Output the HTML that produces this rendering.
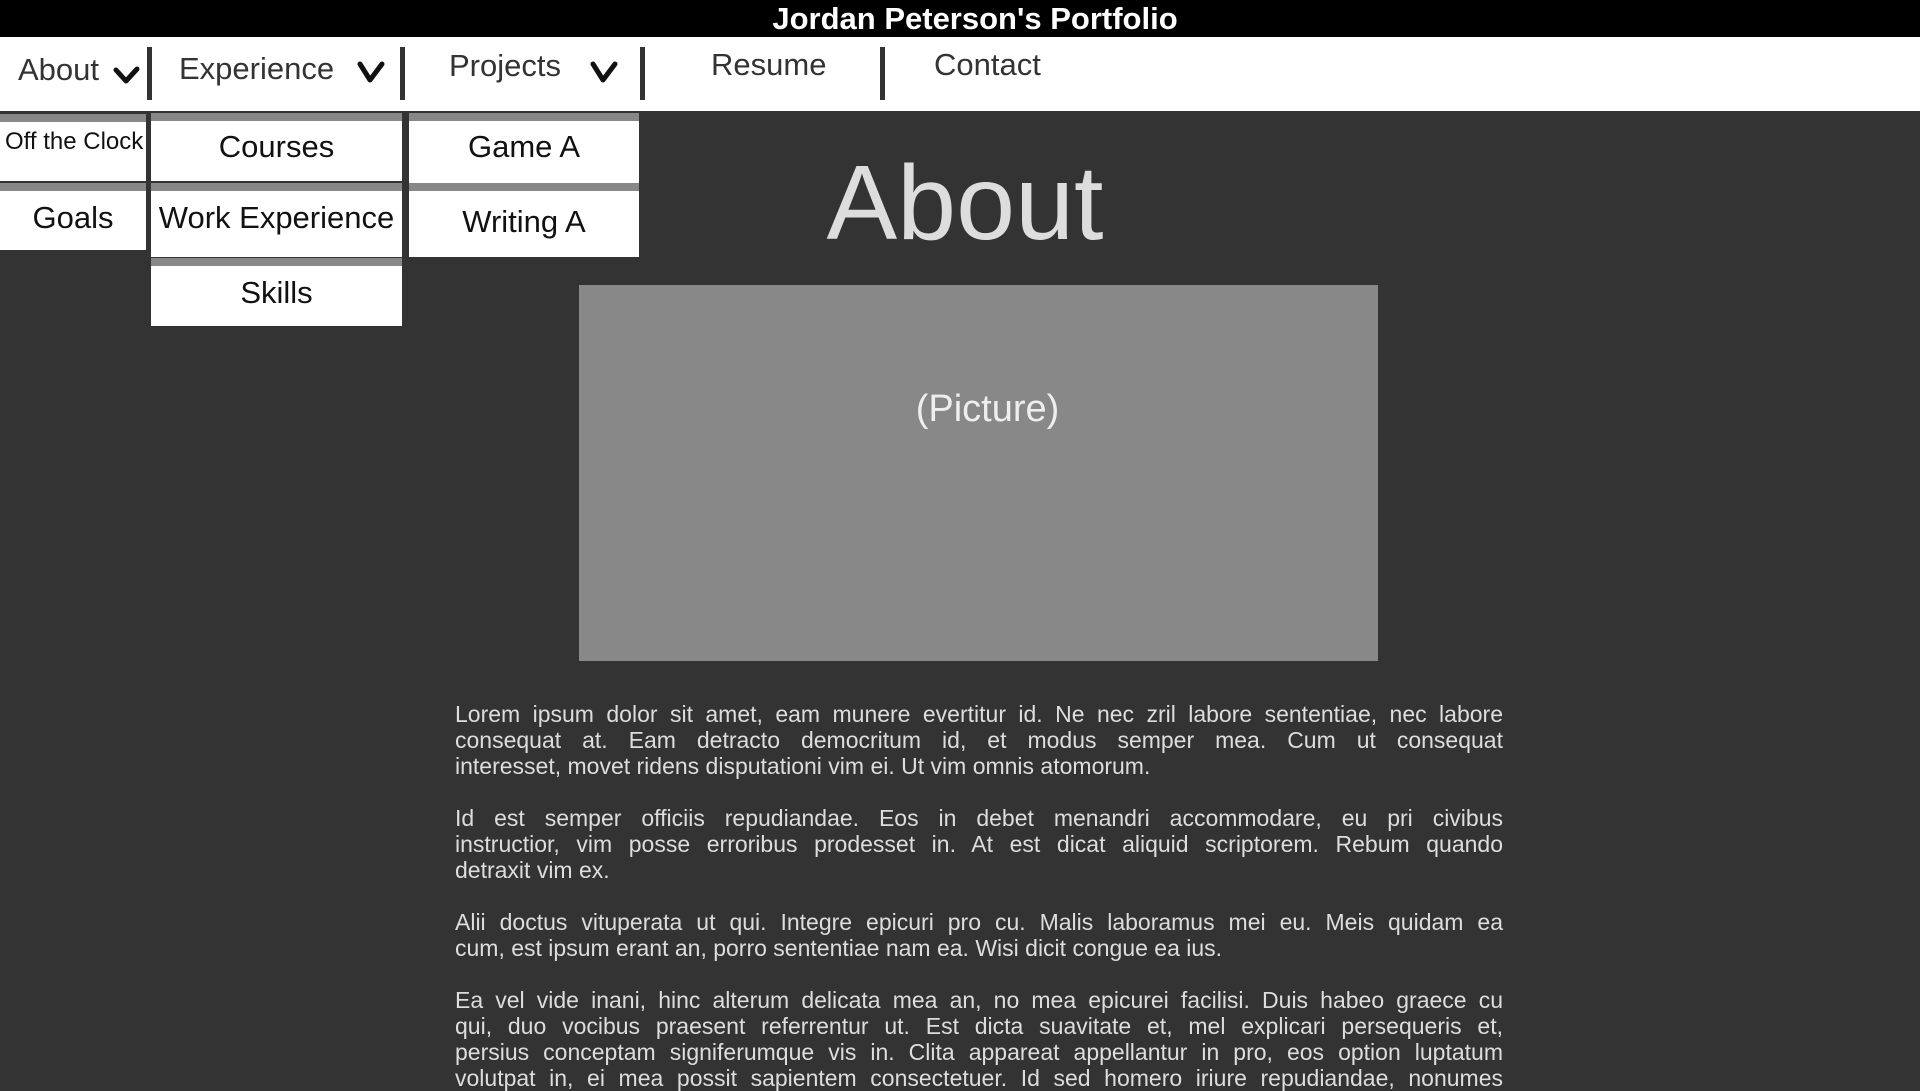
<!DOCTYPE html>
<html><head><meta charset="utf-8"><style>
*{margin:0;padding:0;box-sizing:border-box}
body{width:1920px;height:1080px;overflow:hidden;background:#333;font-family:"Liberation Sans",sans-serif;position:relative}
.hdr{position:absolute;left:0;top:0;width:1920px;height:37px;background:#000;color:#fff;font-weight:bold;font-size:31px;text-align:center;line-height:37px;padding-left:30px}
.nav{position:absolute;left:0;top:37px;width:1920px;height:74px;background:#fff}
.nt{position:absolute;font-size:31px;color:#333;white-space:nowrap}
.sep{position:absolute;top:47px;width:5px;height:53px;background:#333}
.chev{position:absolute}
.dd{position:absolute;background:#fff;border-top:8px solid #888;color:#111;text-align:center;font-size:31px;white-space:nowrap}
h1{position:absolute;left:0;width:1930px;top:150px;text-align:center;font-weight:normal;font-size:106px;color:#ddd;line-height:1}
.pic{position:absolute;left:579px;top:285px;width:799px;height:376px;background:#888;color:#eee;font-size:38px;text-align:center;padding-top:103px;padding-left:18px}
.txt{position:absolute;left:455px;top:701px;width:1048px;color:#ddd;font-size:23px;line-height:26px}
.l{text-align:justify;text-align-last:justify;white-space:nowrap;height:26px}
.e{height:26px}
</style></head><body>
<div class="hdr">Jordan Peterson's Portfolio</div>
<div class="nav"></div>
<div class="nt" style="left:18px;top:52px">About</div>
<svg class="chev" style="left:113px;top:66px" width="28" height="20"><polyline points="3,4 13,15 24,3" fill="none" stroke="#111" stroke-width="5" stroke-linejoin="round" stroke-linecap="round"/></svg>
<div class="sep" style="left:147px"></div>
<div class="nt" style="left:179px;top:51px">Experience</div>
<svg class="chev" style="left:356px;top:60px" width="30" height="24"><polyline points="4,4 14,20 26,4" fill="none" stroke="#111" stroke-width="5" stroke-linejoin="round" stroke-linecap="round"/></svg>
<div class="sep" style="left:400px"></div>
<div class="nt" style="left:449px;top:48px">Projects</div>
<svg class="chev" style="left:589px;top:60px" width="30" height="24"><polyline points="4,4 14,20 26,4" fill="none" stroke="#111" stroke-width="5" stroke-linejoin="round" stroke-linecap="round"/></svg>
<div class="sep" style="left:640px"></div>
<div class="nt" style="left:711px;top:47px">Resume</div>
<div class="sep" style="left:880px"></div>
<div class="nt" style="left:934px;top:47px">Contact</div>

<div class="dd" style="left:0;top:114px;width:146px;height:67px;font-size:24px;text-align:left;padding:6px 0 0 5px">Off the Clock</div>
<div class="dd" style="left:0;top:183px;width:146px;height:67px;padding-top:9px">Goals</div>
<div class="dd" style="left:151px;top:113px;width:251px;height:68px;padding-top:8px">Courses</div>
<div class="dd" style="left:151px;top:183px;width:251px;height:74px;padding-top:9px">Work Experience</div>
<div class="dd" style="left:151px;top:258px;width:251px;height:68px;padding-top:9px">Skills</div>
<div class="dd" style="left:409px;top:113px;width:230px;height:71px;padding-top:8px">Game A</div>
<div class="dd" style="left:409px;top:183px;width:230px;height:74px;padding-top:13px">Writing A</div>

<h1>About</h1>
<div class="pic">(Picture)</div>
<div class="txt">
<div class="l">Lorem ipsum dolor sit amet, eam munere evertitur id. Ne nec zril labore sententiae, nec labore</div>
<div class="l">consequat at. Eam detracto democritum id, et modus semper mea. Cum ut consequat</div>
<div class="e">interesset, movet ridens disputationi vim ei. Ut vim omnis atomorum.</div>
<div class="e"></div>
<div class="l">Id est semper officiis repudiandae. Eos in debet menandri accommodare, eu pri civibus</div>
<div class="l">instructior, vim posse erroribus prodesset in. At est dicat aliquid scriptorem. Rebum quando</div>
<div class="e">detraxit vim ex.</div>
<div class="e"></div>
<div class="l">Alii doctus vituperata ut qui. Integre epicuri pro cu. Malis laboramus mei eu. Meis quidam ea</div>
<div class="e">cum, est ipsum erant an, porro sententiae nam ea. Wisi dicit congue ea ius.</div>
<div class="e"></div>
<div class="l">Ea vel vide inani, hinc alterum delicata mea an, no mea epicurei facilisi. Duis habeo graece cu</div>
<div class="l">qui, duo vocibus praesent referrentur ut. Est dicta suavitate et, mel explicari persequeris et,</div>
<div class="l">persius conceptam signiferumque vis in. Clita appareat appellantur in pro, eos option luptatum</div>
<div class="l">volutpat in, ei mea possit sapientem consectetuer. Id sed homero iriure repudiandae, nonumes</div>
</div>
</body></html>
